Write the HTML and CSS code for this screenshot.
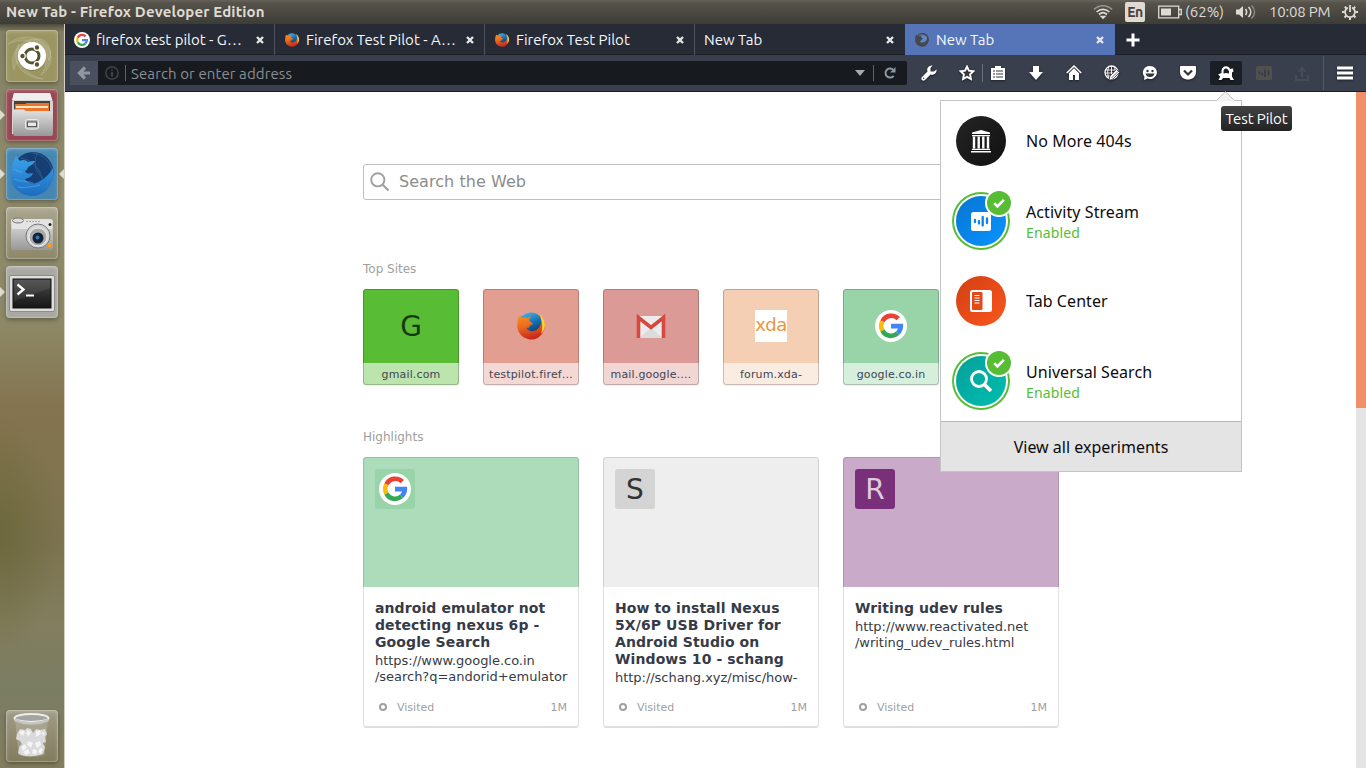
FILE: index.html
```html
<!DOCTYPE html>
<html lang="en">
<head>
<meta charset="utf-8">
<title>New Tab - Firefox Developer Edition</title>
<link rel="stylesheet" href="styles.css">
</head>
<body>
<svg class="defs" width="0" height="0">
  <defs>
    <linearGradient id="fxOrange" x1="0" y1="0" x2="0.3" y2="1"><stop offset="0" stop-color="#f7941d"/><stop offset=".5" stop-color="#ea6a20"/><stop offset="1" stop-color="#c92a1c"/></linearGradient>
    <linearGradient id="fxBlue" x1="0" y1="0" x2="0.4" y2="1"><stop offset="0" stop-color="#4cc4ee"/><stop offset=".5" stop-color="#1873b8"/><stop offset="1" stop-color="#0b2c5c"/></linearGradient>
    <linearGradient id="devBlue" x1="0" y1="0" x2="0" y2="1"><stop offset="0" stop-color="#3ba3ea"/><stop offset="1" stop-color="#1c6cc0"/></linearGradient>
    <linearGradient id="metal" x1="0" y1="0" x2="0" y2="1"><stop offset="0" stop-color="#e2e2e2"/><stop offset="1" stop-color="#989898"/></linearGradient>
    <linearGradient id="screen" x1="0" y1="0" x2="0" y2="1"><stop offset="0" stop-color="#4a4a4a"/><stop offset="1" stop-color="#161616"/></linearGradient>
    <symbol id="google" viewBox="0 0 32 32">
      <circle cx="16" cy="16" r="16" fill="#fff"/>
      <g fill="none" stroke-width="4.6">
        <path d="M23.3 8.7A9.8 9.8 0 0 0 7.4 11.4" stroke="#ea4335"/>
        <path d="M7.4 11.4A9.8 9.8 0 0 0 7.4 20.6" stroke="#fbbc05"/>
        <path d="M7.4 20.6A9.8 9.8 0 0 0 22.6 23.3" stroke="#34a853"/>
        <path d="M22.6 23.3A9.8 9.8 0 0 0 25.8 16.1H16" stroke="#4285f4"/>
      </g>
    </symbol>
    <symbol id="firefox" viewBox="0 0 32 32">
      <circle cx="16" cy="15.500" r="13" fill="url(#fxBlue)"/>
      <path d="M25 5c5 5 6 10 4 15-3 8-10 11-16 9C5 27 1 20 2.500 12c0-3 1-5 3-7l1.500 3c2-1 4-1 5 0 1-1 3-1.500 4-1.500-2 2-2 3-1 5 1 1 2 1 3 2-1 1.500-3 1.500-3.500 3 0 1.500-2 1-3 1.500 2 4 8 4 11 1 3-2 4-6 3.500-9z" fill="url(#fxOrange)"/>
      <path d="M24 4c7 5 8 14 2 20 2-6 2-13-2-20z" fill="#fbd534"/>
    </symbol>
    <symbol id="check" viewBox="0 0 24 24">
      <circle cx="12" cy="12" r="12" fill="#57bd35"/>
      <path d="M7.200 12.200l3.200 3.200 6.400-6.600" fill="none" stroke="#fff" stroke-width="2.600"/>
    </symbol>
  </defs>
</svg>

<header class="panel">
  <div class="panel-title">New Tab - Firefox Developer Edition</div>
  <div class="indicators">
    <svg class="i-wifi" width="20" height="16" viewBox="0 0 20 16" fill="none" stroke-width="1.7"><path d="M1 5.5c5-5 13-5 18 0" stroke="#98958a"/><path d="M3.6 8c3.800-3.600 9-3.600 12.800 0M6 10.500c2.500-2.300 5.500-2.300 8 0" stroke="#dfdbd2"/><path d="M8.500 12.500l1.500 1.500 1.500-1.500z" fill="#dfdbd2" stroke="#dfdbd2"/></svg>
    <span class="lang">En</span>
    <svg class="i-battery" width="24" height="14" viewBox="0 0 24 14"><path d="M.7 1.200h20v11.600h-20zM21 4.500h2.300v5H21" fill="none" stroke="#dfdbd2" stroke-width="1.300"/><path d="M3 3.500h10v7H3z" fill="#dfdbd2"/></svg>
    <span class="battery-text">(62%)</span>
    <svg class="i-volume" width="20" height="16" viewBox="0 0 20 16" fill="none" stroke-width="1.600"><path d="M0 5.500h3l4-3.500v12l-4-3.500H0z" fill="#dfdbd2"/><path d="M9.500 5c1.500 2 1.500 4 0 6M12.500 3c3 3 3 7 0 10" stroke="#dfdbd2"/><path d="M15.500 1.500c4 4 4 9 0 13" stroke="#8d897e"/></svg>
    <span class="clock">10:08 PM</span>
    <svg class="i-gear" width="16" height="16" viewBox="0 0 16 16" fill="none" stroke="#dfdbd2"><path d="M10.200 3.600a5 5 0 1 1-4.400 0" stroke-width="1.800"/><path d="M8 1v7" stroke-width="1.800"/><path d="M2.800 2.800l1.800 1.800M13.200 2.800l-1.800 1.800M0 8h2.500M13.500 8H16M2.500 13.500l2-2M13.500 13.500l-2-2M8 13.500V16" stroke-width="2"/></svg>
  </div>
</header>

<div class="desktop">
  <nav class="launcher">
    <div class="app ubuntu">
      <svg width="52" height="52" viewBox="0 0 52 52"><g fill="#fff" fill-opacity=".1" stroke="#fff" stroke-opacity=".14"><path d="M8 40C2 22 16 7 35 9c8 2 12 14 8 22C40 16 18 12 8 40z"/><path d="M2 14c14-12 33-8 42 6 4 12-3 22-9 25C50 24 28 2 2 14z"/><path d="M13 14C3 31 16 48 37 49 22 46 10 33 13 14z"/></g><circle cx="26" cy="27" r="14" fill="#4f4a25" fill-opacity=".3"/><circle cx="26" cy="26" r="14" fill="#fff"/><circle cx="26" cy="26" r="7" fill="none" stroke="#585330" stroke-width="3"/><g fill="#585330" stroke="#fff" stroke-width="1.200"><circle cx="16.500" cy="26" r="2.800"/><circle cx="31" cy="17.500" r="2.800"/><circle cx="31" cy="34.500" r="2.800"/></g></svg>
    </div>
    <div class="app files run">
      <svg width="52" height="52" viewBox="0 0 52 52"><path d="M8 4h36l3 9v32H6V13z" fill="#d4d4d4"/><path d="M8 4h36l2 7H6z" fill="#eee"/><path d="M8 12h36v10H8z" fill="#48403c"/><path d="M9 15h10l2-1h22v8H9z" fill="#e8762a"/><path d="M10 17h32v2H10z" fill="#fde4c4"/><path d="M7 20.500h11l2 2h27V45q0 2-2 2H9q-2 0-2-2z" fill="url(#metal)"/><rect x="19.500" y="30.500" width="13" height="9.500" rx="2" fill="#b6b6b6" stroke="#ececec"/><rect x="21.500" y="33" width="9" height="4.500" fill="#e8e8e8" stroke="#555"/></svg>
    </div>
    <div class="app firefox-dev run focused">
      <svg width="52" height="52" viewBox="0 0 52 52"><circle cx="27" cy="24.500" r="20.500" fill="#163e72"/><path d="M26 5c12 1 20 10 20 20M15 10c12 2 21 12 22 26M31 5c-3 9-3 18 6 25" fill="none" stroke="#2c5c92"/><path d="M10 8l4 5c3-2 6-1 8 1 3-1 5-1 7-1-1 2-3 4-5 5-3 1-2 4-5 5 1 3 4 3 8 2-1 4-5 5-8 6 3 5 10 6 15 2 6-3 10-8 13-13 2 15-6 27-20 28C14 48 4 39 5 25c0-6 2-12 5-17z" fill="url(#devBlue)"/><path d="M8 31c8 3 14 2 19 4M12 39c8 2 15-1 22-2M8 21c3 2 5 3 8 3" stroke="#66bcf4" stroke-opacity=".4" stroke-width="1.300" fill="none"/></svg>
    </div>
    <div class="app camera">
      <svg width="52" height="52" viewBox="0 0 52 52"><path d="M5 13q0-1 2-1h37q3 0 3 3v26q0 2-2 2H7q-2 0-2-2z" fill="url(#metal)"/><path d="M6 14h40v8H6z" fill="#e4e4e4"/><ellipse cx="12" cy="13.500" rx="5.500" ry="2.500" fill="#ddd" stroke="#777"/><path d="M20 14.500h15" stroke="#aaa" stroke-dasharray="2 1"/><circle cx="32" cy="29" r="12" fill="#d6d6d6" stroke="#777"/><circle cx="32" cy="30" r="9" fill="#aaa" stroke="#eee"/><circle cx="32" cy="31" r="5.500" fill="#152235"/><circle cx="31.500" cy="30.500" r="2" fill="#3a76b4"/><circle cx="44" cy="17.500" r="1.500" fill="#222"/><path d="M42 37h3v3h-3z" fill="#ff9d21"/></svg>
    </div>
    <div class="app terminal run">
      <svg width="52" height="52" viewBox="0 0 52 52"><rect x="3.500" y="9.500" width="45" height="36" rx="1.500" fill="#dedede" stroke="#8b8b8b"/><rect x="7" y="13" width="38" height="29" fill="url(#screen)" stroke="#111"/><path d="M8 14h36v8L8 35z" fill="#fff" opacity=".08"/><path d="M11.500 18.500l6 5-6 5" fill="none" stroke="#fff" stroke-width="2.300"/><path d="M20 29.500h8" stroke="#fff" stroke-width="2"/></svg>
    </div>
    <div class="app trash">
      <svg width="52" height="52" viewBox="0 0 52 52"><path d="M9 9h33l-3.500 36q-13 4-26 0z" fill="#c8c8b8" opacity=".35"/><g fill="#dadada"><path d="M11 24l3-5 5 1 2-2 4 1 2 4 3-4 4 1 5-1 2 5-2 3 1 5-4 1-2 2-4-2-4 2-5-2-5 1-2-3-4-2z"/><path d="M13 37l3-3-1-5 6 1 5-2 4 2 6-1 1 5 2 3-2 7q-12 4-22 1l-3-2 1-4z"/></g><g fill="#f4f4f4"><path d="M13 22l4-2 2 3-3 3zM22 20l3 2-2 4-3-2zM30 21l4-1 1 4-5 3zM36 22l3 1-2 3zM15 37l4-3 2 4-4 3zM22 31l5 2-2 5-4-3zM29 33l5-2 1 4-4 3zM17 42l5-3 2 4-4 2zM27 39l4 1-1 5-4-2zM34 38l3 1-2 5-3-2z"/></g><ellipse cx="25.500" cy="8" rx="17" ry="4" fill="#a5a5a0" stroke="#ededed" stroke-width="2"/><path d="M8.500 10q17 7 34 0" fill="none" stroke="#c5c5c5" stroke-width="2.500"/></svg>
    </div>
  </nav>

  <main class="browser">
    <div class="tabs">
      <div class="tab"><svg class="fav" width="16" height="16"><use href="#google"/></svg><span class="tab-label">firefox test pilot - G…</span><svg class="close" width="8" height="8" viewBox="0 0 8 8"><path d="M1 1l6 6M7 1L1 7"/></svg></div>
      <div class="tab"><svg class="fav" width="16" height="16"><use href="#firefox"/></svg><span class="tab-label">Firefox Test Pilot - A…</span><svg class="close" width="8" height="8" viewBox="0 0 8 8"><path d="M1 1l6 6M7 1L1 7"/></svg></div>
      <div class="tab"><svg class="fav" width="16" height="16"><use href="#firefox"/></svg><span class="tab-label">Firefox Test Pilot</span><svg class="close" width="8" height="8" viewBox="0 0 8 8"><path d="M1 1l6 6M7 1L1 7"/></svg></div>
      <div class="tab last"><span class="tab-label">New Tab</span><svg class="close" width="8" height="8" viewBox="0 0 8 8"><path d="M1 1l6 6M7 1L1 7"/></svg></div>
      <div class="tab active"><svg class="fav" width="16" height="16" viewBox="0 0 32 32"><circle cx="16" cy="15.500" r="12" fill="#6685c4"/><path d="M25 5c5 5 6 10 4 15-3 8-10 11-16 9C5 27 1 20 2.500 12c0-3 1-5 3-7l1.500 3c2-1 4-1 5 0 1-1 3-1.500 4-1.500-2 2-2 3-1 5 1 1 2 1 3 2-1 1.500-3 1.500-3.500 3 0 1.500-2 1-3 1.500 2 4 8 4 11 1 3-2 4-6 3.500-9zM7 6C12 1 20 0 27 6l-1 4C21 4 14 3 7 8z" fill="#45484f"/></svg><span class="tab-label">New Tab</span><svg class="close" width="8" height="8" viewBox="0 0 8 8"><path d="M1 1l6 6M7 1L1 7"/></svg></div>
      <svg class="new-tab" width="14" height="14" viewBox="0 0 14 14"><path d="M7 .5v13M.5 7h13" stroke="#fff" stroke-width="3"/></svg>
    </div>

    <div class="toolbar">
      <div class="back"><svg width="14" height="14" viewBox="0 0 14 14"><path d="M8 1.500L2.500 7 8 12.500M3 7h10" fill="none" stroke="#9297a0" stroke-width="3.200"/></svg></div>
      <div class="urlbar">
        <svg width="14" height="14" viewBox="0 0 14 14" fill="none" stroke="#4a4e54"><circle cx="7" cy="7" r="6.200" stroke-width="1.200"/><path d="M7 6v4.500M7 3.500v1.300" stroke-width="1.600"/></svg>
        <i class="url-line"></i>
        <span class="url-text">Search or enter address</span>
        <svg class="drop" width="10" height="6" viewBox="0 0 10 6"><path d="M0 0h10L5 6z" fill="#a5a8ad"/></svg>
        <i class="url-line"></i>
        <svg class="reload" width="12" height="12" viewBox="0 0 12 12"><path d="M9.600 8.800A4.500 4.500 0 1 1 9 2.700" fill="none" stroke="#8f98a3" stroke-width="2"/><path d="M11.500 0v5.500H6z" fill="#8f98a3"/></svg>
      </div>
      <div class="tools">
        <span class="tool"><svg width="16" height="16" viewBox="0 0 16 16"><path d="M15.500 4.500a4.500 4.500 0 0 1-6 5L4 15a2 2 0 0 1-3-3l5.500-5.500a4.500 4.500 0 0 1 5-6L9.500 3v3.500H13z" fill="#fff"/><circle cx="2.700" cy="13.300" r=".7" fill="#30343e"/></svg></span>
        <span class="tool star"><svg width="16" height="16" viewBox="0 0 16 16"><path d="M8 1.700l1.900 4 4.400.6-3.200 3.100.8 4.500L8 11.800l-3.900 2.100.8-4.500-3.200-3.100 4.400-.6z" fill="none" stroke="#fff" stroke-width="1.900"/></svg></span>
        <span class="tool clipboard"><svg width="16" height="16" viewBox="0 0 16 16"><path d="M1 3h4V1h6v2h4v12H1z" fill="#fff"/><path d="M3 6h2M6 6h7M3 9h2M6 9h7M3 12h2M6 12h7" stroke="#343946" stroke-width="1.200"/></svg></span>
        <span class="tool"><svg width="16" height="16" viewBox="0 0 16 16"><path d="M5 1h6v6h4l-7 8-7-8h4z" fill="#fff"/></svg></span>
        <span class="tool"><svg width="16" height="16" viewBox="0 0 16 16"><path d="M8 2.800L3 8v7h4v-5h2v5h4V8z" fill="#fff"/><path d="M.8 8L8 1l7.200 7" fill="none" stroke="#fff" stroke-width="1.500"/><path d="M2 9l6-6 6 6" fill="none" stroke="#555" stroke-width=".8"/></svg></span>
        <span class="tool"><svg width="16" height="16" viewBox="0 0 16 16"><circle cx="7.500" cy="7.500" r="6.500" fill="none" stroke="#fff" stroke-width="1.300"/><path d="M1 5h13M1 8h13M2 11h11M7.500 1v14M4.500 2q-2 5 0 11M10.500 2q2 5 0 11" stroke="#fff" stroke-width=".9" fill="none"/><path d="M5 15.500l1-4.500 6.500-6.500 3 3L9 14z" fill="#fff" stroke="#30343e" stroke-width=".8"/><path d="M7.500 13L14 6.500" stroke="#555" stroke-width=".8"/></svg></span>
        <span class="tool"><svg width="16" height="16" viewBox="0 0 16 16"><path d="M8 1a7 6.500 0 1 1-2.500 12.600L2 15l.5-3.300A6.500 6.500 0 0 1 8 1z" fill="#fff"/><circle cx="5.500" cy="6" r="1.200" fill="#30343e"/><circle cx="10.500" cy="6" r="1.200" fill="#30343e"/><path d="M3.500 8.500h9q-1 3.500-4.500 3.500T3.500 8.500z" fill="#30343e"/></svg></span>
        <span class="tool"><svg width="16" height="16" viewBox="0 0 16 16"><path d="M1 1h14q1 0 1 1v5c0 10-16 10-16 0V2q0-1 1-1z" fill="#fff"/><path d="M4 5.500l4 4 4-4" fill="none" stroke="#30343e" stroke-width="2.200"/></svg></span>
        <span class="tool"><span class="pressed"><svg width="18" height="16" viewBox="0 0 18 16"><path d="M4.500 8V6.500C4.500 0 12 0 13 4l3-.5.500 3-1.500 1v4l2 3.500h-3.500l-1-2H6l-1.500 2H1.500l1.700-3.500L1 9.500z" fill="#fff"/><path d="M6.500 8.500V6.500c0-4 4.500-4 5.500 0v2q-3-1-5.500 0z" fill="#1b2027"/></svg></span></span>
        <span class="tool dim"><svg width="16" height="14" viewBox="0 0 16 14"><rect width="16" height="14" rx="1.500" fill="#50514f"/><path d="M3.500 5.500v3M6.300 6.500v3M9 3.500v7.500M12.500 4.500v5" stroke="#343a46" stroke-width="1.600"/></svg></span>
        <span class="tool dim"><svg width="14" height="15" viewBox="0 0 14 15"><path d="M1 9v5h12V9M7 11V2M3.500 5.500L7 2l3.500 3.500" fill="none" stroke="#474c57" stroke-width="2"/></svg></span>
      </div>
      <div class="menu-button"><svg width="16" height="14" viewBox="0 0 16 14"><path d="M0 2h16M0 7h16M0 12h16" stroke="#fff" stroke-width="3"/></svg></div>
    </div>

    <div class="viewport">
      <section class="newtab">
        <div class="search"><svg width="20" height="20" viewBox="0 0 20 20" fill="none" stroke="#a0a0a0"><circle cx="7.800" cy="7.800" r="6.600" stroke-width="1.900"/><path d="M12.500 12.500l6 6" stroke-width="2.200"/></svg><span>Search the Web</span></div>
        <h2 class="h-sites">Top Sites</h2>
        <div class="sites">
          <div class="site green"><div class="site-icon"><b class="letter">G</b></div><div class="site-name">gmail.com</div></div>
          <div class="site salmon"><div class="site-icon"><svg width="32" height="32"><use href="#firefox"/></svg></div><div class="site-name">testpilot.firef…</div></div>
          <div class="site rose"><div class="site-icon"><svg width="32" height="32" viewBox="0 0 32 32"><path d="M4 6h24v22H4z" fill="#ececec"/><path d="M4 28l12-10 12 10z" fill="#dcdcdc"/><path d="M3.500 28V7.500L16 17.500 28.500 7.500V28" fill="none" stroke="#d8483e" stroke-width="3.600"/></svg></div><div class="site-name">mail.google.…</div></div>
          <div class="site peach"><div class="site-icon"><span class="xda">xda</span></div><div class="site-name">forum.xda-</div></div>
          <div class="site mint"><div class="site-icon"><svg width="32" height="32"><use href="#google"/></svg></div><div class="site-name">google.co.in</div></div>
        </div>
        <h2 class="h-highlights">Highlights</h2>
        <div class="cards">
          <article class="card">
            <div class="preview p-green"><div class="badge"><svg width="32" height="32"><use href="#google"/></svg></div></div>
            <div class="body"><h3>android emulator not<br>detecting nexus 6p -<br>Google Search</h3><p>https://www.google.co.in<br>/search?q=andorid+emulator</p></div>
            <footer><i></i><span>Visited</span><time>1M</time></footer>
          </article>
          <article class="card">
            <div class="preview p-gray"><div class="badge">S</div></div>
            <div class="body"><h3>How to install Nexus<br>5X/6P USB Driver for<br>Android Studio on<br>Windows 10 - schang</h3><p>http://schang.xyz/misc/how-</p></div>
            <footer><i></i><span>Visited</span><time>1M</time></footer>
          </article>
          <article class="card">
            <div class="preview p-purple"><div class="badge">R</div></div>
            <div class="body"><h3>Writing udev rules</h3><p>http://www.reactivated.net<br>/writing_udev_rules.html</p></div>
            <footer><i></i><span>Visited</span><time>1M</time></footer>
          </article>
        </div>
      </section>
      <div class="scrollbar"><div class="thumb"></div></div>
    </div>
  </main>
</div>

<aside class="popup">
  <svg class="arrow" width="20" height="10" viewBox="0 0 20 10"><path d="M0 10L9.500.7 19 10" fill="#f2f1f0" stroke="#c4c3c1"/></svg>
  <div class="exp"><div class="disc black"><svg width="20" height="24" viewBox="0 0 20 24"><path d="M1 3.500L10 1l9 2.500V5H1zM1 6h18v1.200H1zM1 19.800h18V21H1zM0 22h20v1.500H0z" fill="#fff"/><path d="M3 7.500v12M7.700 7.500v12M12.300 7.500v12M17 7.500v12" stroke="#fff" stroke-width="2.400"/></svg></div><span class="name">No More 404s</span></div>
  <div class="exp"><div class="disc blue on"><svg width="20" height="19" viewBox="0 0 20 19"><rect width="20" height="19" rx="2.500" fill="#fff"/><path d="M4 8v2M8 9.200v2.300M11.700 5v8.500M16 6.500v4.500" stroke="#0a84e8" stroke-width="2.300" stroke-linecap="round"/></svg><svg class="tick" width="28" height="28"><circle cx="14" cy="14" r="14" fill="#fff"/><use href="#check" x="2" y="2" width="24" height="24"/></svg></div><span class="name">Activity Stream<small>Enabled</small></span></div>
  <div class="exp"><div class="disc orange"><svg width="22" height="22" viewBox="0 0 22 22"><rect width="22" height="22" rx="2.500" fill="#fff"/><rect x="2" y="2" width="10.500" height="18" rx="1" fill="#e24a19"/><path d="M4.500 5.500h5M4.500 8h5M4.500 10.500h5M4.500 13h5" stroke="#fff" stroke-width="1.200"/></svg></div><span class="name">Tab Center</span></div>
  <div class="exp"><div class="disc teal on"><svg width="22" height="22" viewBox="0 0 22 22" fill="none" stroke="#fff"><circle cx="9" cy="9" r="7.500" stroke-width="2.800"/><path d="M14 14l7 7" stroke-width="3.600"/></svg><svg class="tick" width="28" height="28"><circle cx="14" cy="14" r="14" fill="#fff"/><use href="#check" x="2" y="2" width="24" height="24"/></svg></div><span class="name">Universal Search<small>Enabled</small></span></div>
  <div class="view-all">View all experiments</div>
</aside>
<div class="tooltip">Test Pilot</div>
</body>
</html>
```
FILE: styles.css
```css
* { box-sizing: border-box; }
body { margin: 0; width: 1366px; height: 768px; overflow: hidden; display: flex; flex-direction: column; font-family: Ubuntu, "Noto Sans", sans-serif; font-size: 15px; color: #fff; background: #fff; }
svg { display: block; flex: none; }
.defs { position: absolute; }

.panel { height: 24px; flex: none; display: flex; align-items: center; justify-content: space-between; padding: 0 8px 0 6px; background: linear-gradient(#67635a 0, #56534a 3px, #3d3c37 24px); color: #dfdbd2; white-space: nowrap; line-height: 24px; }
.panel-title { font-weight: 700; font-size: 15px; letter-spacing: 0.15px; }
.indicators { display: flex; align-items: center; }
.lang { width: 20px; height: 20px; margin: 0 13px 0 12px; border-radius: 2px; background: #dfdbd2; color: #45433d; font-weight: 600; font-size: 14px; line-height: 20px; text-align: center; letter-spacing: -0.5px; }
.battery-text { margin: 0 13px 0 3px; width: 38px; }
.clock { margin: 0 12px 0 13px; width: 61px; letter-spacing: -0.2px; }

.desktop { flex: 1; display: flex; min-height: 0; }
.launcher { width: 65px; flex: none; display: flex; flex-direction: column; padding: 6px 0 6px 6px; gap: 7px; border-right: 1px solid #d5cfc0; background: radial-gradient(ellipse 60px 120px at 0 510px, rgba(98,97,48,.6), transparent), linear-gradient(#4d4b3d 0, #858166 8px, #908c6c 180px, #8d8866 300px, #84744f 385px, #81744f 445px, #7c7350 520px, #827e5e 600px, #7b7d63 665px, #837d5f 744px); }
.app { width: 52px; height: 52px; border-radius: 4px; position: relative; box-shadow: inset 0 0 0 1px rgba(255,255,255,.22), inset 0 2px 4px rgba(255,255,255,.22), 0 2px 4px rgba(0,0,0,.3); }
.ubuntu { background: #9b9561; }
.files { background: #984652; }
.firefox-dev { background: #4687b2; }
.camera { background: linear-gradient(#a9a58e, #8d8869); }
.terminal { background: #a9a8a3; }
.trash { margin-top: auto; background: linear-gradient(#a09c85, #817c5d); }
.run::before { content: ""; position: absolute; left: -6px; top: 21px; border: 5px solid transparent; border-left-color: #dedbd0; border-right: 0; }
.focused::after { content: ""; position: absolute; right: -6px; top: 21px; border: 5px solid transparent; border-right-color: #dedbd0; border-left: 0; }

.browser { flex: 1; display: flex; flex-direction: column; min-width: 0; }
.tabs { height: 31px; flex: none; display: flex; background: #272b35; border-bottom: 1px solid #1b1e25; }
.tab { width: 210px; height: 31px; display: flex; align-items: center; padding: 1px 10px 0 9px; border-right: 1px solid #50535c; }
.last { border-right: 0; padding-right: 11px; }
.active { background: #5675b9; border-right: 0; padding-right: 11px; }
.fav { margin-right: 6px; }
.tab-label { flex: 1; white-space: nowrap; color: #f5f7fa; line-height: 20px; }
.close path { stroke: #e5e6e9; stroke-width: 2.4; }
.new-tab { margin: 9px 0 0 11px; }

.toolbar { height: 37px; flex: none; display: flex; align-items: center; background: #393f4c; border-bottom: 1px solid #1b1e25; padding-left: 5px; }
.back { width: 28px; height: 24px; display: grid; place-items: center; background: #494f5c; }
.urlbar { width: 809px; height: 24px; display: flex; align-items: center; padding: 0 11px 0 7px; background: #171b1f; border-radius: 0 2px 2px 0; }
.url-line { width: 1px; height: 16px; margin: 0 5px 0 6px; background: #5f6368; }
.url-text { flex: 1; color: #8b8f94; letter-spacing: 0.1px; line-height: 24px; padding-top: 1px; }
.drop { margin-right: 2px; }
.reload { margin-left: 5px; }
.tools { display: flex; margin-left: 3px; }
.tool { width: 38px; height: 24px; display: grid; place-items: center; }
.tool svg, .menu-button svg { filter: drop-shadow(0 1px 1px rgba(0,0,0,.5)); }
.tool.dim svg { filter: none; }
.clipboard { margin-left: -7px; }
.star { position: relative; }
.star::after { content: ""; position: absolute; left: 34px; top: 3px; width: 1px; height: 18px; background: #6a6f7a; }
.pressed { width: 32px; height: 24px; display: grid; place-items: center; border-radius: 2px; background: #1a1f26; }
.menu-button { flex: 1; height: 34px; margin-left: 2px; border-left: 1px solid #535966; display: grid; place-items: center; }

.viewport { flex: 1; display: flex; min-height: 0; background: #fff; font-family: "DejaVu Sans", sans-serif; }
.newtab { flex: 1; padding: 72px 0 0 298px; }
.search { width: 696px; height: 36px; display: flex; align-items: center; gap: 9px; padding-left: 6px; border: 1px solid #bfbfbf; border-radius: 3px; color: #8c8c8c; font-size: 16px; letter-spacing: 0.05px; }
.search span { padding-bottom: 2px; }
h2 { margin: 0; font-size: 12px; line-height: 16px; font-weight: 400; color: #a0a0a0; }
.h-sites { margin-top: 61px; }
.sites { display: flex; gap: 24px; margin-top: 12px; }
.site { width: 96px; height: 96px; border-radius: 3px; overflow: hidden; display: flex; flex-direction: column; box-shadow: 0 1px 0 rgba(0,0,0,.06); position: relative; }
.site::after, .card::after { content: ""; position: absolute; inset: 0; border: 1px solid rgba(0,0,0,.2); border-radius: 3px; }
.site-icon { height: 74px; display: grid; place-items: center; }
.site-name { height: 22px; background: rgba(255,255,255,.6); color: #424554; font-size: 11px; line-height: 24px; letter-spacing: 0.15px; text-align: center; white-space: nowrap; }
.letter { font-size: 28px; font-weight: 400; color: #18370e; }
.green { background: #58bd35; }
.salmon { background: #e39e92; }
.rose { background: #db9a95; }
.peach { background: #f4cfb3; }
.mint { background: #99d4a9; }
.xda { width: 32px; height: 32px; background: #fff; color: #eb963f; font: 18px/29px "DejaVu Sans", sans-serif; letter-spacing: -0.5px; display: flex; justify-content: center; overflow: hidden; }
.h-highlights { margin-top: 44px; }
.cards { display: flex; gap: 24px; margin-top: 12px; }
.card { width: 216px; height: 270px; position: relative; display: flex; flex-direction: column; border-radius: 3px; overflow: hidden; box-shadow: 0 1px 0 #dedede; color: #363b47; }
.card::after { border-color: rgba(0,0,0,.12); }
.preview { height: 130px; flex: none; padding: 12px; }
.badge { width: 40px; height: 40px; border-radius: 3px; display: grid; place-items: center; font-size: 28px; line-height: 42px; }
.p-green { background: #addcba; }
.p-green .badge { background: #99d4a9; }
.p-gray { background: #eee; }
.p-gray .badge { background: #d4d4d4; color: #333; }
.p-purple { background: #c9abc9; }
.p-purple .badge { background: #7a2f7a; color: #decbde; }
.body { padding: 13px 12px 0; flex: 1; white-space: nowrap; }
h3 { margin: 0; font-size: 14px; line-height: 17px; font-weight: 700; letter-spacing: 0.1px; }
p { margin: 2px 0 0; font-size: 13px; line-height: 16px; letter-spacing: -0.03px; }
footer { height: 16px; margin: 0 12px 12px; display: flex; align-items: center; font-size: 11px; color: #a0a0a0; }
footer i { width: 8px; height: 8px; margin: 0 10px 0 4px; border: 2px solid #a0a0a0; border-radius: 50%; }
footer time { margin-left: auto; }
.scrollbar { width: 10px; background: #e4e4e4; }
.thumb { height: 316px; background: #f08f68; }

.popup { position: absolute; left: 940px; top: 100px; width: 302px; height: 372px; border: 1px solid #c4c4c4; background: #fff; color: #0c0c0d; font-family: "Noto Sans", sans-serif; font-size: 16px; letter-spacing: 0.07px; display: flex; flex-direction: column; }
.arrow { position: absolute; left: 275px; top: -10px; }
.exp { height: 80px; display: flex; align-items: center; padding-left: 15px; gap: 20px; }
.disc { position: relative; width: 50px; height: 50px; border-radius: 50%; display: grid; place-items: center; }
.on { box-shadow: 0 0 0 2px #fff, 0 0 0 4px #57bd35; }
.black { background: linear-gradient(135deg, #242424, #111); }
.blue { background: linear-gradient(135deg, #0675d3, #0a94ff); }
.orange { background: linear-gradient(135deg, #d43f13, #f9571e); }
.teal { background: linear-gradient(135deg, #04a09a, #00beaf); }
.tick { position: absolute; left: 29px; top: -7px; }
.name { line-height: 22px; }
.name small { display: block; font-size: 14px; line-height: 19px; letter-spacing: 0.15px; color: #57bd35; }
.view-all { height: 50px; border-top: 1px solid #b9b9b9; background: #e4e4e4; line-height: 50px; text-align: center; letter-spacing: 0; }
.tooltip { position: absolute; left: 1221px; top: 106px; width: 71px; height: 25px; border-radius: 3px; background: linear-gradient(#434343, #222); text-align: center; line-height: 26px; letter-spacing: -0.1px; white-space: nowrap; }
```
